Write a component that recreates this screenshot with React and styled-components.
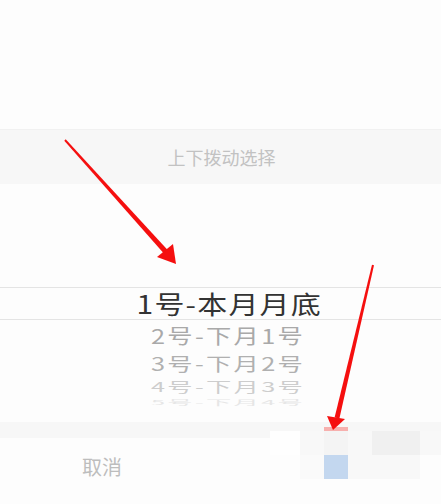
import React from 'react';
import styled, { createGlobalStyle } from 'styled-components';

const GlobalStyle = createGlobalStyle`
  html, body {
    margin: 0;
    padding: 0;
    background: #fdfdfd;
  }
  body {
    font-family: "Noto Sans CJK SC", "Noto Sans", sans-serif;
  }
`;

const Page = styled.div`
  position: relative;
  width: 441px;
  height: 504px;
  overflow: hidden;
  display: flex;
  flex-direction: column;
  background: #fdfdfd;
`;

const Backdrop = styled.div`
  height: 129px;
  flex-shrink: 0;
  background: #fdfdfd;
`;

const Header = styled.div`
  height: 54px;
  flex-shrink: 0;
  display: flex;
  align-items: center;
  justify-content: center;
  background: #f7f7f7;
  border-top: 1px solid #f1f1f1;
  color: #c2c2c2;
  font-size: 18px;
  padding-left: 2px;
`;

const Wheel = styled.div`
  height: 238px;
  flex-shrink: 0;
  display: flex;
  flex-direction: column;
  padding-top: 103px;
  box-sizing: border-box;
  background: #fdfdfd;
`;

const Row = styled.div`
  height: ${p => p.$h}px;
  flex-shrink: 0;
  display: flex;
  align-items: center;
  justify-content: center;
  padding-left: ${p => p.$shift || 0}px;
  box-sizing: border-box;
  font-size: ${p => p.$size}px;
  letter-spacing: ${p => p.$spacing}px;
  color: ${p => p.$color};
  white-space: nowrap;
  line-height: 1;
`;

const Selected = styled(Row)`
  border-top: 1px solid #e4e4e4;
  border-bottom: 1px solid #e4e4e4;
`;

const Label = styled.span`
  display: inline-block;
  transform: scale(${p => p.$wide}, ${p => p.$squash});
`;

const Gap = styled.div`
  height: 16px;
  flex-shrink: 0;
  background: #f7f7f7;
`;

const Footer = styled.div`
  flex: 1;
  display: grid;
  grid-template-columns: 204px 1fr;
  background: #fdfdfd;
`;

const FooterButton = styled.div`
  display: flex;
  align-items: center;
  justify-content: center;
  padding-bottom: 10px;
  font-size: 20px;
  color: ${p => p.$color || '#bdbdbd'};
`;

const Mosaic = styled.div`
  position: absolute;
  left: 270px;
  top: 427px;
  display: grid;
  grid-template-columns: 30px 24px 24px 24px 48px 21px;
  grid-template-rows: 4px 24px 24px;
`;

const Cell = styled.div`
  background: ${p => p.$c};
`;

const Arrows = styled.svg`
  position: absolute;
  left: 0;
  top: 0;
  pointer-events: none;
`;

const rows = [
  { text: '2号-下月1号', h: 30, color: '#a9a9a9', squash: 0.92 },
  { text: '3号-下月2号', h: 26, color: '#b0b0b0', squash: 0.82 },
  { text: '4号-下月3号', h: 20, color: '#cdcdcd', squash: 0.6 },
  { text: '5号-下月4号', h: 11, color: '#e6e6e6', squash: 0.3 },
];

const mosaic = [
  'transparent', 'transparent', '#f7b0ae', 'transparent', 'transparent', 'transparent',
  '#fefefe', '#f8f8f8', '#f4f4f4', '#f8f8f8', '#f0f0f0', '#f8f8f8',
  '#fdfdfd', '#fafafa', '#c3d7ef', '#f8f8f8', '#f8f8f8', '#fdfdfd',
];

export default function App() {
  return (
    <>
      <GlobalStyle />
      <Page>
        <Backdrop />
        <Header>上下拨动选择</Header>
        <Wheel>
          <Selected $h={33} $size={25} $spacing={1} $color="#333" $shift={18}>
            <Label $wide={1.2} $squash={1}>1号-本月月底</Label>
          </Selected>
          {rows.map(r => (
            <Row key={r.text} $h={r.h} $size={22} $spacing={2} $color={r.color} $shift={16}>
              <Label $wide={1.15} $squash={r.squash}>{r.text}</Label>
            </Row>
          ))}
        </Wheel>
        <Gap />
        <Footer>
          <FooterButton>取消</FooterButton>
          <FooterButton $color="transparent">确定</FooterButton>
        </Footer>

        <Mosaic>
          {mosaic.map((c, i) => <Cell key={i} $c={c} />)}
        </Mosaic>

        <Arrows width="441" height="504" viewBox="0 0 441 504">
          <polygon points="64.3,140.7 65.7,139.3 167.9,250.3 164.1,253.7" fill="#f50f0f" />
          <polygon points="176,264 157,257 173,244" fill="#f50f0f" />
          <polygon points="374,265.2 372,264.8 334.6,417.4 339.4,418.6" fill="#f50f0f" />
          <polygon points="333,430 327,416 345,419" fill="#f50f0f" />
        </Arrows>
      </Page>
    </>
  );
}
